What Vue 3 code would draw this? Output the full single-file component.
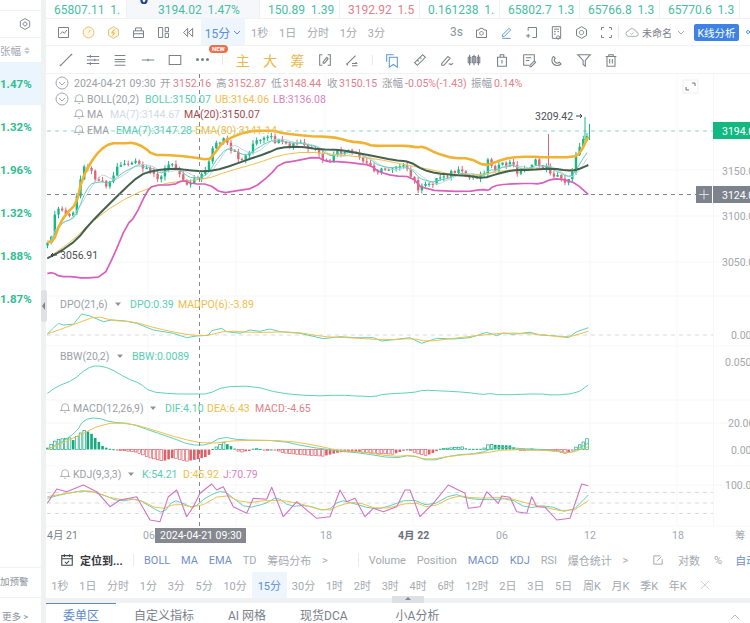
<script setup>
// zoomed traces: read off the reference at 3x, origin given per segment
const trace = (ox, oy, s) =>
  s.split(' ').map(p => p.split(',').map(Number)).map(([x, y]) => [ox + x / 3, oy + y / 3])
const toPoints = list => list.map(([x, y]) => `${x.toFixed(1)},${y.toFixed(1)}`).join(' ')

// corner cutting, so the slow bands don't look like straight segments
const smooth = list => {
  const out = [list[0]]
  for (let i = 0; i < list.length - 1; i++) {
    const [x0, y0] = list[i]
    const [x1, y1] = list[i + 1]
    out.push([x0 * 0.75 + x1 * 0.25, y0 * 0.75 + y1 * 0.25], [x0 * 0.25 + x1 * 0.75, y0 * 0.25 + y1 * 0.75])
  }
  out.push(list[list.length - 1])
  return out
}

const interp = (list, x) => {
  if (x <= list[0][0]) return list[0][1]
  for (let i = 1; i < list.length; i++) {
    if (x <= list[i][0]) {
      const [x0, y0] = list[i - 1]
      const [x1, y1] = list[i]
      return y0 + ((y1 - y0) * (x - x0)) / (x1 - x0 || 1)
    }
  }
  return list[list.length - 1][1]
}
const rnd = i => {
  const v = Math.sin(i * 12.9898) * 43758.5453
  return v - Math.floor(v)
}

const STEP = 3.67
const BARS = 148
const barX = i => 47.5 + i * STEP

// price pane
const pricePath = [
  ...trace(40, 100, '22,440 40,380 50,320 80,345 100,345 125,220 135,180 155,220 190,245 205,255 225,215 240,190 290,190 320,215 360,230 385,195 415,205 440,255 460,235 500,215 515,140 555,120 570,155 610,180 640,130 690,115 740,140 780,130 830,160 860,190'),
  ...trace(340, 100, '0,155 40,160 70,185 120,215 180,190 220,240 240,270 270,250 310,225 350,215 390,235 430,220 440,180 470,205 510,190 540,220 580,185 620,205 650,230 680,245 700,200 725,115 745,95'),
]
const ub = [
  ...trace(40, 100, '22,425 40,425 60,370 80,340 110,310 125,240 150,190 180,150 210,130 250,130 280,128 310,140 340,165 380,165 420,168 460,172 505,180 520,165 550,125 580,110 620,95 660,92 700,92 730,100 800,108 860,110'),
  ...trace(340, 100, '0,115 30,125 70,128 100,138 150,137 200,137 230,142 250,140 290,160 340,175 390,175 435,198 470,185 510,172 570,170 620,172 700,172 720,160 745,110'),
]
const boll = [
  ...trace(40, 100, '22,475 60,455 110,420 150,370 200,320 250,270 300,225 340,212 400,205 440,210 500,215 550,205 620,180 680,160 720,142 780,140 840,148'),
  ...trace(340, 100, '0,150 40,157 100,168 160,180 210,185 250,210 290,220 340,225 390,228 430,235 470,222 520,210 570,210 640,205 680,212 710,210 745,195'),
]
const lb = [
  ...trace(40, 100, '22,520 40,518 60,530 100,530 130,535 190,530 220,470 260,375 285,350 320,275 340,255 400,255 430,240 460,252 505,252 545,280 590,272 640,265 690,225 720,190 770,182 830,170 860,185'),
  ...trace(340, 100, '0,185 50,190 90,195 115,215 160,228 215,230 250,270 380,275 430,268 445,272 460,258 500,252 570,250 600,252 640,235 680,240 710,252 745,283'),
]
const ema80 = [
  ...trace(40, 100, '22,475 100,420 150,370 230,310 320,265 400,245 500,237 560,215 650,190 720,165 800,155'),
  ...trace(340, 100, '0,165 100,175 200,195 280,210 340,225 420,225 500,210 600,205 700,212 745,195'),
]

const closes = Array.from({ length: BARS }, (_, i) => interp(pricePath, barX(i)) + (rnd(i) - 0.5) * 7)
const candles = closes.map((close, i) => {
  const open = i ? closes[i - 1] : close + 3
  const top = Math.min(open, close)
  const bottom = Math.max(open, close)
  return {
    x: barX(i),
    up: close < open,
    top,
    height: Math.max(bottom - top, 1),
    high: top - rnd(i + 300) * 4,
    low: bottom + rnd(i + 600) * 4,
  }
})

const movingAvg = n => closes.map((_, i) => {
  const part = closes.slice(Math.max(0, i - n + 1), i + 1)
  return [barX(i), part.reduce((a, b) => a + b, 0) / part.length]
})
const ema7 = []
closes.forEach((c, i) => {
  const prev = i ? ema7[i - 1][1] : c
  ema7.push([barX(i), prev + (c - prev) * 0.25])
})

// indicator panes
const panes = [
  { cls: 'l-teal', pts: [...trace(40, 290, '22,132 40,115 55,100 70,105 100,103 125,72 150,78 190,95 215,90 250,92 290,100 340,120 400,130 440,143 470,138 505,136 515,122 545,115 560,125 600,130 630,120 660,124 690,117 720,125 780,130 850,146'), ...trace(340, 290, '0,140 50,143 100,143 125,153 170,148 210,143 245,160 290,145 340,147 390,143 440,127 470,137 490,129 520,133 570,127 600,135 650,138 685,143 710,125 745,113')] },
  { cls: 'l-gold', pts: smooth([...trace(40, 290, '22,132 70,115 110,100 170,78 220,92 280,95 350,115 420,130 470,137 505,136 560,122 640,128 760,125 850,140'), ...trace(340, 290, '0,142 60,145 140,150 220,145 260,155 340,145 430,135 500,128 600,133 680,143 745,124')]) },
  { cls: 'l-teal', pts: smooth([...trace(40, 290, '22,310 50,290 100,270 140,235 170,226 210,235 260,265 300,280 330,305 400,312 460,312 505,312 550,290 640,288 720,310 820,318'), ...trace(340, 290, '0,315 50,318 105,320 130,312 220,308 250,300 310,303 380,307 430,314 450,310 480,315 600,311 640,316 710,310 745,285')]) },
  { cls: 'l-teal', pts: smooth([...trace(40, 290, '22,478 60,460 110,425 130,390 170,382 215,397 270,400 340,425 400,445 450,465 505,465 545,440 600,450 720,452 800,470'), ...trace(340, 290, '0,483 70,490 160,505 215,495 270,514 340,495 420,490 470,470 530,475 640,480 690,490 710,478 745,460')]) },
  { cls: 'l-gold', pts: smooth([...trace(40, 290, '22,478 100,445 190,400 270,400 340,420 420,445 500,462 600,450 740,452 820,465'), ...trace(340, 290, '0,482 60,485 160,500 215,495 260,510 340,497 430,490 500,478 640,482 690,490 745,470')]) },
  { cls: 'l-teal', pts: smooth([...trace(40, 290, '22,625 70,612 140,600 190,615 240,635 290,625 340,655 370,670 400,630 430,640 460,655 500,620 550,600 580,625 620,655 680,640 710,620 750,650 800,645 860,665'), ...trace(340, 290, '0,630 40,640 90,655 130,655 210,625 270,650 340,610 380,625 440,630 510,625 560,655 620,645 690,670 745,615')]) },
  { cls: 'l-gold', pts: smooth([...trace(40, 290, '22,620 80,610 150,600 230,630 290,625 360,660 410,640 470,655 550,610 610,640 690,630 760,635 860,665'), ...trace(340, 290, '0,645 50,635 120,660 220,635 270,655 350,615 400,625 500,622 580,645 690,668 745,632')]) },
  { cls: 'l-pink', pts: [...trace(40, 290, '22,640 50,597 80,605 130,585 170,605 210,650 240,630 290,620 330,690 360,695 385,620 410,600 440,680 460,650 480,610 515,582 530,600 550,590 580,650 620,670 640,625 680,628 695,592 730,680 770,635 830,685 870,680'), ...trace(340, 290, '0,600 20,635 45,625 75,680 100,655 130,665 170,650 195,600 210,600 240,680 280,640 325,585 375,610 385,655 420,650 440,605 475,640 485,618 510,622 530,665 560,670 575,620 590,650 615,652 650,690 690,685 725,582 745,587')] },
].map(p => ({ cls: p.cls, pts: toPoints(p.pts) }))

const histPath = [
  ...trace(40, 0, '22,5 50,30 90,35 100,28 130,58 150,52 170,30 190,8 210,2 230,0 250,-3 290,-8 330,-25 370,-35 400,-25 440,-35 470,-30 505,-20 515,0 530,8 550,22 570,12 585,2 600,-8 630,-4 640,3 660,2 680,-4 700,2 730,-10 780,-15 850,-20'),
  ...trace(340, 0, '0,-8 60,-8 120,-12 160,-14 190,-4 205,2 230,-12 260,-18 285,-8 300,2 370,8 380,2 430,2 445,15 510,12 530,2 550,-4 570,2 610,-1 650,-6 680,-12 700,2 725,18 745,36'),
]
const ZERO = 449.5
const hist = Array.from({ length: BARS }, (_, i) => interp(histPath, barX(i)))
const bars = hist.map((v, i) => ({
  x: barX(i) - 1.3,
  y: v > 0 ? ZERO - v : ZERO,
  h: Math.max(Math.abs(v), 1),
  cls: [v > 0 ? 'b-up' : 'b-down', i && Math.abs(v) > Math.abs(hist[i - 1]) ? 'hollow' : ''],
}))

const gridX = [148, 236, 325, 413, 501, 590, 677]
const gridY = [170, 216, 262, 296, 346, 400, 423, 466, 485, 526]

const lines = [
  { cls: 'l-light', pts: toPoints(movingAvg(7)) },
  { cls: 'l-teal', pts: toPoints(ema7) },
  { cls: 'l-ema80', pts: toPoints(smooth(ema80)) },
  { cls: 'l-lb', pts: toPoints(smooth(lb)) },
  { cls: 'l-boll', pts: toPoints(smooth(boll)) },
  { cls: 'l-ub', pts: toPoints(smooth(ub)) },
]

const texts = [
  ['74', 87, '2024-04-21 09:30', 't-gray'], ['160', 87, '开', 't-gray'], ['173', 87, '3152.16', 't-red'], ['216', 87, '高', 't-gray'], ['228', 87, '3152.87', 't-red'], ['271', 87, '低', 't-gray'], ['283', 87, '3148.44', 't-red'], ['327', 87, '收', 't-gray'], ['339', 87, '3150.15', 't-red'], ['382', 87, '涨幅', 't-gray'], ['405', 87, '-0.05%(-1.43)', 't-red'], ['471', 87, '振幅', 't-gray'], ['494', 87, '0.14%', 't-red'],
  ['87', 103, 'BOLL(20,2)', 't-gray'], ['145', 103, 'BOLL:3150.07', 't-teal'], ['215', 103, 'UB:3164.06', 't-gold'], ['273', 103, 'LB:3136.08', 't-pink'],
  ['87', 118, 'MA', 't-gray'], ['110', 118, 'MA(7):3144.67', 't-light'], ['184', 118, 'MA(20):3150.07', 't-dark'],
  ['87', 134, 'EMA', 't-gray'], ['116', 134, 'EMA(7):3147.28', 't-teal'], ['195', 134, 'EMA(80):3141.14', 't-gold'],
  ['60', 308, 'DPO(21,6)', 't-gray'], ['130', 308, 'DPO:0.39', 't-teal'], ['178', 308, 'MADPO(6):-3.89', 't-gold'],
  ['60', 360, 'BBW(20,2)', 't-gray'], ['132', 360, 'BBW:0.0089', 't-teal'],
  ['73', 412, 'MACD(12,26,9)', 't-gray'], ['165', 412, 'DIF:4.10', 't-teal'], ['207', 412, 'DEA:6.43', 't-gold'], ['255', 412, 'MACD:-4.65', 't-red'],
  ['73', 478, 'KDJ(9,3,3)', 't-gray'], ['142', 478, 'K:54.21', 't-teal'], ['183', 478, 'D:45.92', 't-gold'], ['223', 478, 'J:70.79', 't-pink'],
  ['535', 120, '3209.42', 't-ink'], ['60', 259, '3056.91', 't-ink'],
  ['722', 175, '3150.00', 't-axis'], ['722', 220, '3100.00', 't-axis'], ['722', 266, '3050.00', 't-axis'],
  ['731', 339, '0.00', 't-axis'], ['725', 366, '0.0500', 't-axis'], ['728', 427, '20.00', 't-axis'], ['731', 454, '0.00', 't-axis'], ['725', 489, '100.00', 't-axis'],
  ['47', 539, '4月 21', 't-date'], ['143', 539, '06', 't-axis'], ['320', 539, '18', 't-axis'], ['398', 539, '4月 22', 't-date2'], ['496', 539, '06', 't-axis'], ['584', 539, '12', 't-axis'], ['672', 539, '18', 't-axis'], ['735', 539, '筹', 't-axis'],
]

const bells = [[74, 93], [74, 108], [74, 124], [60, 402], [60, 468]]
const carets = [115, 117, 150, 128].map((x, i) => [x, [304, 356, 408, 474][i]])

const tickers = [
  { text: '65807.11  1.', width: 81 },
  { text: '3194.02  1.47%', width: 133, active: true },
  { text: '150.89  1.39', width: 80 },
  { text: '3192.92  1.5', width: 80, red: true },
  { text: '0.161238  1.', width: 80 },
  { text: '65802.7  1.3', width: 80 },
  { text: '65766.8  1.3', width: 80 },
  { text: '65770.6  1.3', width: 80 },
]
const rates = ['1.47%', '1.32%', '1.96%', '1.32%', '1.88%', '1.87%']

const barLeft = [
  'M3 3h12v12H3z M5 11l3-3 2 2 3-4',
  null,
  null,
  'M3 7h12v8H3z M5.5 7V3.5h7V7 M3 10.5h12',
  'M3 3h5v12H3z M11 3h4v5h-4z M11 10h4v5h-4z',
  'M8 4L3 9l5 5z M14 4L9 9l5 5z',
]
const periodsTop = ['1秒', '1日', '分时', '1分', '3分']
const barRight = [
  'M3 6h3l1.2-2h3.6L12 6h3v9H3z M9 7.8a2.2 2.2 0 1 0 .01 0z',
  null,
  'M5 7V3h10v12H10 M2.5 13h5 M5 10.5v5',
  'M4 2h10v14H4z M6 5h6 M6 8h2 M10 8h2 M6 11h2 M11 13a2 2 0 1 0 .01 0z',
  'M9 2l6 3.5v7L9 16l-6-3.5v-7z M9 6.5a2.5 2.5 0 1 0 .01 0z',
  'M3 6V3h3 M12 3h3v3 M3 12v3h3 M15 12v3h-3',
]
const drawA = [
  'M3 15L15 3 M2 14.5l1.5 1.5 M14.5 2l1.5 1.5',
  'M2 5h14 M2 9h14 M2 13h14 M6 3.5v3 M11 7.5v3 M6 11.5v3',
  'M3 4h12 M3 8.5h12 M3 11h12 M3 15h12',
  'M2 9h14 M9 7.5v3',
  'M2.5 4h13v10h-13z',
]
const drawB = [
  'M6 3H3v12h3 M12 3h3v12h-3 M7 11l4-5 1.5 1.5-4 5H7z',
  'M3 14L13 4 M2.5 13l2 2 M9 13h6 M9 15.5h6 M13 11.5l2 1.5',
]
const drawC = [
  null,
  'M3 12L12 3l3 3-9 9z M6 9l1.5 1.5 M9 6l1.5 1.5',
  'M3 13L10 5l2.5 2-7 8H3z M11 14c1.5-2 2 1 3 0s1-1 2-1',
  'M4 3v12 M9 3v12 M14 3v12 M2.5 6h3v6h-3z M7.5 5h3v7h-3z M12.5 6h3v6h-3z',
  'M4 6h10v10H4z M7 6V3h4v3 M9 9v4',
  'M3 3h12v7 M3 3v12h6 M5.5 6.5h6 M5.5 9.5h4 M10 15l5-5 1.5 1.5-5 5H10z',
  'M5 5a6 6 0 1 0 8.5 8.5l-2-2a3 3 0 1 1-4.5-4.5z M5 5l2 2 M13.5 13.5l-2-2',
  'M2 3h14l-5.5 6.5V16L8 14V9.5z',
  'M3 5h12 M6.5 5V3h5v2 M4.5 5v11h9V5 M7.5 8v5 M10.5 8v5',
]

const indicatorsA = [
  { t: 'BOLL', on: true }, { t: 'MA', on: true }, { t: 'EMA', on: true }, { t: 'TD' }, { t: '筹码分布' }, { t: '>' },
]
const indicatorsB = [
  { t: 'Volume' }, { t: 'Position' }, { t: 'MACD', on: true }, { t: 'KDJ', on: true }, { t: 'RSI' }, { t: '爆仓统计' }, { t: '>' },
]
const periods = ['1秒', '1日', '分时', '1分', '3分', '5分', '10分', '15分', '30分', '1时', '2时', '3时', '4时', '6时', '12时', '2日', '3日', '5日', '周K', '月K', '季K', '年K']
</script>

<template>
  <div class="app">
    <aside class="side">
      <div class="side-top">
        <svg class="ic side-hex" viewBox="0 0 18 18"><path d="M9 2l6 3.5v7L9 16l-6-3.5v-7z M9 6.5a2.5 2.5 0 1 0 .01 0z" /></svg>
      </div>
      <div class="side-head">张幅 <span class="sort"><i></i><i></i></span></div>
      <div v-for="(r, i) in rates" :key="i" class="rate" :class="{ active: i === 0 }">{{ r }}</div>
      <div class="side-fill"></div>
      <div class="side-alert">加预警</div>
      <div class="side-more">更多 &gt;</div>
    </aside>

    <div class="gutter"><span class="collapse"></span></div>

    <main class="main">
      <div class="tickers">
        <div v-for="t in tickers" :key="t.text" class="ticker" :class="{ active: t.active, red: t.red }" :style="{ width: t.width + 'px' }">
          <svg v-if="t.active" class="coin" viewBox="0 0 10 10"><circle cx="5" cy="3" r="4.5" fill="#1d3f8f" /><path d="M5 0l2 3-2 3-2-3z" fill="#fff" /></svg>
          <span>{{ t.text }}</span>
        </div>
      </div>

      <div class="bar bar-one">
        <div v-for="(d, i) in barLeft" :key="i" class="cell">
          <svg v-if="i === 1" class="ic gold" viewBox="0 0 18 18"><circle cx="9" cy="9" r="6.5" fill="#fdf6e4" /><path d="M9 9l2.5-3" /></svg>
          <svg v-else-if="i === 2" class="ic gold" viewBox="0 0 18 18"><path d="M9 2l6 3.5v7L9 16l-6-3.5v-7z" fill="#fdf6e4" /><path class="bolt" d="M10 5L7 9.5h3L8 13" /></svg>
          <svg v-else class="ic" viewBox="0 0 18 18"><path :d="d" /></svg>
        </div>
        <div class="period-now">15分 <svg class="chev" viewBox="0 0 8 5"><path d="M1 1l3 3 3-3" /></svg></div>
        <span v-for="p in periodsTop" :key="p" class="period-top">{{ p }}</span>
        <span class="spacer"></span>
        <span class="sec">3s</span>
        <div v-for="(d, i) in barRight" :key="'r' + i" class="cell">
          <svg v-if="i === 1" class="ic blue" viewBox="0 0 18 18"><path d="M4 12L12 4l2 2-8 8H4z M4 16h10" /></svg>
          <svg v-else class="ic" viewBox="0 0 18 18"><path :d="d" /></svg>
        </div>
        <span class="sep"></span>
        <svg class="ic cloud" viewBox="0 0 18 14"><path d="M5 12a3.5 3.5 0 0 1-.5-7A5 5 0 0 1 14 6a3 3 0 0 1 0 6z M7 8l1.5 1.5L11 7" /></svg>
        <span class="name">未命名</span>
        <svg class="chev name-chev" viewBox="0 0 8 5"><path d="M1 1l3 3 3-3" /></svg>
        <button class="analysis">K线分析</button>
        <span class="dot"></span>
      </div>

      <div class="bar bar-two">
        <div v-for="(d, i) in drawA" :key="'a' + i" class="tool"><svg class="ic" viewBox="0 0 18 18"><path :d="d" /></svg></div>
        <div class="tool"><span class="more-dots"><i></i><i></i><i></i></span><em class="new">NEW</em></div>
        <span class="sep2"></span>
        <div v-for="w in ['主', '大', '筹']" :key="w" class="tool word">{{ w }}</div>
        <div v-for="(d, i) in drawB" :key="'b' + i" class="tool"><svg class="ic" viewBox="0 0 18 18"><path :d="d" /></svg></div>
        <span class="sep2"></span>
        <div v-for="(d, i) in drawC" :key="'c' + i" class="tool">
          <svg v-if="i === 0" class="ic blue" viewBox="0 0 18 18"><path d="M3 11V3h8 M6 6h9v11l-4.5-3L6 17z" /></svg>
          <svg v-else class="ic" viewBox="0 0 18 18"><path :d="d" /></svg>
        </div>
      </div>

      <svg class="chart" viewBox="46 74 704 474" width="704" height="474">
        <g class="grid">
          <line v-for="x in gridX" :key="'x' + x" :x1="x" :x2="x" y1="74" y2="526" />
          <line v-for="y in gridY" :key="'y' + y" x1="46" x2="750" :y1="y" :y2="y" />
          <line x1="713.5" x2="713.5" y1="74" y2="526" />
        </g>

        <line class="dash-teal" x1="47" x2="713" y1="131" y2="131" />
        <line class="dash-soft" x1="47" x2="713" y1="335" y2="335" />
        <line class="dash-soft" x1="47" x2="713" y1="492.5" y2="492.5" />
        <line class="dash-soft" x1="47" x2="713" y1="503" y2="503" />
        <line class="dash-soft" x1="47" x2="713" y1="513.5" y2="513.5" />

        <g v-for="(c, i) in candles" :key="'c' + i" :class="c.up ? 'c-up' : 'c-down'">
          <line :x1="c.x" :x2="c.x" :y1="c.high" :y2="c.low" />
          <rect :x="c.x - 1.2" :y="c.top" width="2.4" :height="c.height" />
        </g>
        <line class="wick-red" x1="548.5" x2="548.5" y1="134" y2="170" />
        <line class="wick-green" x1="585" x2="585" y1="117" y2="140" />
        <line class="wick-green" x1="589.5" x2="589.5" y1="124" y2="140" />

        <polyline v-for="(l, i) in lines" :key="'l' + i" :class="l.cls" :points="l.pts" />

        <rect v-for="(b, i) in bars" :key="'b' + i" :class="b.cls" :x="b.x" :y="b.y" width="2.6" :height="b.h" />
        <polyline v-for="(p, i) in panes" :key="'p' + i" :class="p.cls" :points="p.pts" />

        <line class="dash-grey" x1="199.5" x2="199.5" y1="74" y2="528" />
        <line class="dash-grey" x1="47" x2="697" y1="194.5" y2="194.5" />

        <text v-for="(t, i) in texts" :key="'t' + i" :x="t[0]" :y="t[1]" :class="t[3]">{{ t[2] }}</text>

        <g v-for="(b, i) in bells" :key="'bell' + i" class="bell" :transform="`translate(${b[0]},${b[1]}) scale(0.85)`">
          <path d="M0 10h12 M2 10V6a4 4 0 0 1 8 0v4 M5 11.5a1 1 0 0 0 2 0" />
        </g>
        <g v-for="y in [83, 99]" :key="'fold' + y" class="bell">
          <circle cx="62" :cy="y" r="6" />
          <path :d="`M59 ${y - 1}l3 3 3-3`" />
        </g>
        <path v-for="(c, i) in carets" :key="'caret' + i" class="caret" :d="`M${c[0]} ${c[1] - 1.5}h6l-3 3.5z`" />

        <path class="arrow" d="M576 116h6 M580 114l2 2-2 2" />
        <path class="arrow" d="M57 255h-6 M53 253l-2 2 2 2" />

        <g class="expand">
          <rect x="683" y="80" width="15" height="13" />
          <path d="M686 87v3h3 M692 83h3v3" />
        </g>

        <rect class="tag-green" x="713" y="122" width="37" height="17" />
        <text class="t-tag" x="722" y="135">3194.02</text>
        <rect class="tag-grey" x="696" y="186" width="16" height="17" />
        <path class="tag-plus" d="M699 194.5h10 M704 189.5v10" />
        <rect class="tag-grey" x="713" y="186" width="37" height="17" />
        <text class="t-tag" x="722" y="199">3124.02</text>
        <rect class="tag-date" x="155" y="528" width="91" height="15" />
        <text class="t-tag" x="160" y="539">2024-04-21 09:30</text>
      </svg>

      <div class="indicators">
        <svg class="ic cal" viewBox="0 0 16 16"><path d="M2 3h12v11H2z M2 6.5h12 M5 1.5v3 M11 1.5v3 M5.5 10l2 2 3-3" /></svg>
        <b class="locate">定位到...</b>
        <span class="sep3"></span>
        <span v-for="a in indicatorsA" :key="a.t" class="ind" :class="{ on: a.on }">{{ a.t }}</span>
        <span class="sep3 second"></span>
        <span v-for="a in indicatorsB" :key="a.t" class="ind" :class="{ on: a.on }">{{ a.t }}</span>
        <svg class="ic edit" viewBox="0 0 12 12"><path d="M9 1H1v10h10V5 M5 7l5-5" /></svg>
        <span class="ind log">对数</span>
        <span class="ind pct">%</span>
        <span class="ind on">自动</span>
      </div>

      <div class="periods">
        <span v-for="p in periods" :key="p" class="period" :class="{ on: p === '15分' }">{{ p }}</span>
        <svg class="close" viewBox="0 0 11 11"><path d="M1 1l9 9 M10 1l-9 9" /></svg>
      </div>

      <div class="band"><span class="handle"></span></div>

      <nav class="tabs">
        <span class="tab active">委单区</span>
        <span class="tab">自定义指标</span>
        <span class="tab">AI 网格</span>
        <span class="tab">现货DCA</span>
        <span class="tab last">小A分析</span>
        <svg class="up" viewBox="0 0 10 6"><path d="M1 5l4-4 4 4" /></svg>
      </nav>
    </main>
  </div>
</template>

<style scoped>
.app,
.app * {
  box-sizing: border-box;
}
.app {
  display: flex;
  width: 750px;
  height: 623px;
  overflow: hidden;
  background: #fff;
  font-family: Roboto, "Noto Sans CJK SC", sans-serif;
  color: #8d939c;
}
.side {
  display: flex;
  flex-direction: column;
  width: 41px;
  flex: none;
  overflow: hidden;
}
.side-top {
  display: flex;
  flex: none;
  justify-content: flex-end;
  align-items: center;
  height: 28px;
  margin-top: 10px;
  padding-right: 9px;
  border-top: 1px solid #f1f2f4;
  border-bottom: 1px solid #f1f2f4;
}
.side-hex {
  width: 14px;
  height: 14px;
}
.side-head {
  display: flex;
  flex: none;
  align-items: center;
  gap: 3px;
  height: 24px;
  font-size: 10.5px;
  color: #a0a5ad;
}
.sort {
  display: flex;
  flex-direction: column;
  gap: 1px;
}
.sort i {
  width: 0;
  height: 0;
  border-left: 3px solid transparent;
  border-right: 3px solid transparent;
  border-bottom: 3px solid #c5c9cf;
}
.sort i + i {
  border-bottom: 0;
  border-top: 3px solid #c5c9cf;
}
.rate {
  display: flex;
  flex: none;
  align-items: center;
  height: 43px;
  font-size: 11.5px;
  font-weight: 700;
  color: #2fbd92;
}
.rate.active {
  background: #eaf5fd;
}
.side-fill {
  flex: 1;
}
.side-alert {
  flex: none;
  height: 31px;
  line-height: 28px;
  font-size: 9.5px;
  color: #8d939c;
  border-top: 1px solid #f1f2f4;
  border-bottom: 1px solid #f1f2f4;
}
.side-more {
  flex: none;
  height: 25px;
  line-height: 38px;
  padding-left: 2px;
  font-size: 9.5px;
  color: #8d939c;
}
.gutter {
  position: relative;
  width: 5px;
  flex: none;
  background: #f0f1f3;
}
.collapse {
  position: absolute;
  top: 290px;
  left: 0;
  width: 6px;
  height: 32px;
  border-radius: 2px;
  background: #dfe1e5;
}
.collapse::after {
  content: "";
  position: absolute;
  top: 12px;
  left: 1px;
  border-top: 4px solid transparent;
  border-bottom: 4px solid transparent;
  border-right: 3px solid #80858d;
}
.main {
  display: flex;
  flex-direction: column;
  flex: 1;
  min-width: 0;
}
.tickers {
  display: flex;
  flex: none;
  height: 19px;
  border-bottom: 1px solid #f1f2f4;
}
.ticker {
  position: relative;
  flex: none;
  padding-left: 8px;
  overflow: hidden;
  border-right: 1px solid #eef0f2;
  font-size: 12px;
  line-height: 20px;
  white-space: pre;
  color: #48bda5;
}
.ticker.active {
  padding-left: 31px;
  background: #f5f7fa;
}
.ticker.red {
  color: #e0808a;
}
.coin {
  position: absolute;
  left: 13px;
  top: -2px;
  width: 8px;
  height: 8px;
}
.bar {
  display: flex;
  flex: none;
  align-items: center;
  border-bottom: 1px solid #f1f2f4;
}
.bar-one {
  height: 27px;
  padding-left: 5px;
}
.bar-two {
  height: 28px;
  padding-left: 6px;
}
.ic {
  fill: none;
  stroke: #7b8089;
  stroke-width: 1.2;
}
.ic.gold {
  stroke: #e3c27d;
}
.ic.gold .bolt {
  stroke: #eab13c;
}
.ic.blue {
  stroke: #5b9bd5;
}
.cell {
  display: flex;
  flex: none;
  align-items: center;
  justify-content: center;
  width: 25px;
}
.cell svg {
  width: 15px;
  height: 15px;
}
.period-now {
  display: flex;
  flex: none;
  align-items: center;
  justify-content: center;
  gap: 3px;
  width: 44px;
  height: 26px;
  margin-right: 6px;
  background: #eef5fc;
  font-size: 12px;
  color: #5b8fd0;
}
.chev {
  flex: none;
  width: 8px;
  height: 5px;
  fill: none;
  stroke: currentColor;
}
.period-top {
  margin-right: 10.8px;
  font-size: 11px;
  color: #a4a9b0;
}
.spacer {
  flex: 1;
}
.sec {
  margin-right: 6px;
  font-size: 12px;
}
.sep {
  flex: none;
  width: 1px;
  height: 14px;
  margin: 0 6px 0 -1px;
  background: #e6e8eb;
}
.cloud {
  flex: none;
  width: 14px;
  height: 11px;
  margin-right: 3px;
  stroke: #a4a9b0;
}
.name {
  flex: none;
  font-size: 10px;
  color: #7b8089;
  width: 30px;
  white-space: nowrap;
}
.name-chev {
  margin: 0 9px 0 5px;
  color: #a4a9b0;
}
.analysis {
  flex: none;
  width: 45px;
  height: 17px;
  padding: 0;
  border: 0;
  border-radius: 2px;
  background: #3f82e5;
  color: #fff;
  font: 10.5px Roboto, "Noto Sans CJK SC", sans-serif;
}
.dot {
  flex: none;
  width: 4px;
  height: 4px;
  margin-left: 7px;
  border: 1px solid #5b9bd5;
  border-radius: 50%;
}
.tool {
  position: relative;
  display: flex;
  flex: none;
  align-items: center;
  justify-content: center;
  width: 27.4px;
}
.tool svg {
  width: 16px;
  height: 16px;
}
.word {
  font-size: 14px;
  color: #e8b84b;
}
.more-dots {
  display: flex;
  gap: 2px;
}
.more-dots i {
  width: 3px;
  height: 3px;
  border-radius: 50%;
  background: #7b8089;
}
.new {
  position: absolute;
  top: -13px;
  left: 20px;
  width: 19px;
  height: 8px;
  border-radius: 4px;
  background: #e9714c;
  font-size: 6px;
  font-style: normal;
  font-weight: 700;
  line-height: 8px;
  text-align: center;
  color: #fff;
}
.sep2 {
  flex: none;
  width: 12.6px;
  height: 10px;
  background: linear-gradient(#e6e8eb, #e6e8eb) center / 1px 100% no-repeat;
}
.chart {
  display: block;
  flex: none;
}
.chart text {
  font-size: 10.5px;
  font-family: Roboto, "Noto Sans CJK SC", sans-serif;
}
.grid line {
  stroke: #f6f7f8;
}
polyline {
  fill: none;
  stroke-linejoin: round;
}
.dash-teal {
  stroke: #8fd8c6;
  stroke-dasharray: 4 4;
}
.dash-soft {
  stroke: #d8dadd;
  stroke-dasharray: 4 4;
}
.dash-grey {
  stroke: #80858d;
  stroke-dasharray: 4 4;
}
.c-up line,
.wick-green {
  stroke: #16b985;
}
.c-up rect {
  fill: #16b985;
}
.c-down line,
.wick-red {
  stroke: #dc6a76;
}
.c-down rect {
  fill: #dc6a76;
}
.l-ub {
  stroke: #f0b232;
  stroke-width: 2.6;
}
.l-boll {
  stroke: #44604f;
  stroke-width: 2;
}
.l-lb {
  stroke: #d85fbb;
  stroke-width: 1.7;
}
.l-ema80 {
  stroke: #eec04e;
  stroke-width: 1;
}
.l-teal {
  stroke: #5fd0b8;
  stroke-width: 1;
}
.l-light {
  stroke: #c5d2e5;
  stroke-width: 1;
}
.l-gold {
  stroke: #eec04e;
  stroke-width: 1;
}
.l-pink {
  stroke: #cf73c6;
  stroke-width: 1.1;
}
.b-up {
  fill: #16a97d;
}
.b-down {
  fill: #e0606a;
}
.b-up.hollow {
  fill: #fff;
  stroke: #16a97d;
  stroke-width: 0.7;
}
.b-down.hollow {
  fill: #fff;
  stroke: #e0606a;
  stroke-width: 0.7;
}
.t-gray {
  fill: #9aa0a8;
}
.t-red {
  fill: #e0808a;
}
.t-teal {
  fill: #57cdb4;
}
.t-gold {
  fill: #eebd4c;
}
.t-pink {
  fill: #d87fc8;
}
.t-light {
  fill: #d2d9e6;
}
.t-dark {
  fill: #a5484f;
}
.t-ink {
  fill: #4b4f56;
}
.t-axis {
  fill: #a2a7ae;
}
.t-date {
  fill: #7b8089;
}
.t-date2 {
  fill: #6c7178;
  font-weight: 700;
}
.bell {
  fill: none;
  stroke: #a2a7ae;
}
.caret {
  fill: #8d939c;
}
.arrow {
  fill: none;
  stroke: #3c4046;
}
.expand rect {
  fill: #fff;
  stroke: #eceef0;
}
.expand path {
  fill: none;
  stroke: #6c7178;
}
.tag-green {
  fill: #11b981;
}
.tag-grey {
  fill: #7d828c;
}
.tag-plus {
  stroke: #d9dbde;
}
.tag-date {
  fill: #85898f;
}
.chart .t-tag {
  fill: #fff;
}
.indicators {
  display: flex;
  flex: none;
  align-items: center;
  height: 24px;
  padding-left: 14px;
  white-space: nowrap;
  overflow: hidden;
}
.cal {
  flex: none;
  width: 14px;
  height: 14px;
  stroke: #3c4046;
}
.locate {
  flex: none;
  width: 43px;
  margin-left: 6px;
  font-size: 11px;
  color: #33373d;
}
.sep3 {
  flex: none;
  width: 1px;
  height: 12px;
  margin: 0 10px;
  background: #e6e8eb;
}
.sep3.second {
  margin-left: 19px;
}
.ind {
  flex: none;
  margin-right: 10.8px;
  font-size: 11px;
  color: #a4a9b0;
}
.ind.on {
  color: #6f8fc9;
}
.edit {
  flex: none;
  width: 10px;
  height: 10px;
  margin: 0 15px 0 14px;
  stroke: #a4a9b0;
}
.ind.log {
  margin-right: 14px;
}
.ind.pct {
  margin-right: 13px;
}
.periods {
  display: flex;
  flex: none;
  align-items: center;
  height: 26px;
}
.period {
  display: flex;
  align-items: center;
  height: 26px;
  padding: 0 5.35px;
  font-size: 11px;
  color: #a4a9b0;
  white-space: nowrap;
}
.period.on {
  background: #eef5fc;
  color: #5b8fd0;
  padding: 0 5.5px;
}
.close {
  flex: none;
  width: 10px;
  height: 10px;
  margin-left: 8px;
  fill: none;
  stroke: #c9ccd1;
}
.band {
  position: relative;
  flex: none;
  height: 5px;
  background: #f0f1f3;
}
.handle {
  position: absolute;
  top: -2px;
  left: 346px;
  width: 32px;
  height: 7px;
  background: #dde0e4;
}
.handle::after {
  content: "";
  position: absolute;
  top: 1px;
  left: 13px;
  border-left: 3px solid transparent;
  border-right: 3px solid transparent;
  border-bottom: 3px solid #80858d;
}
.tabs {
  position: relative;
  display: flex;
  flex: 1;
  align-items: flex-start;
  font-size: 12px;
  color: #7b8089;
  white-space: nowrap;
}
.tab {
  padding: 0 17px;
  line-height: 26px;
}
.tab.active {
  width: 70px;
  border-top: 1px solid #5a8ac6;
  line-height: 25px;
  margin-right: 1px;
  color: #5a8ac6;
}
.tab.last {
  margin-left: 14px;
}
.up {
  position: absolute;
  top: 11px;
  right: 10px;
  width: 10px;
  height: 6px;
  fill: none;
  stroke: #b5b9bf;
}
</style>

<style>
html,
body {
  margin: 0;
  background: #fff;
}
</style>
